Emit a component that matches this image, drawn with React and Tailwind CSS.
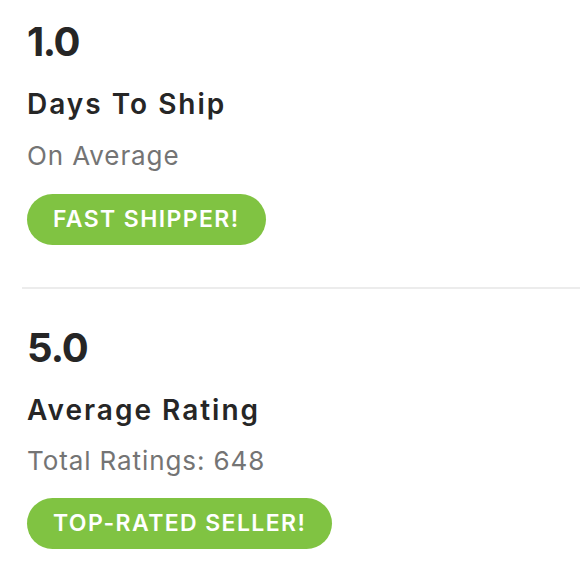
export default function App() {
  const font = { fontFamily: 'Inter, "Noto Sans", sans-serif' };
  return (
    <div className="w-[580px] h-[580px] bg-white overflow-hidden" style={font}>
      <div className="pl-[27px] pt-[22px]">
        <div className="text-[40px] leading-[40px] font-bold text-[#262626] tracking-[-1.5px]">1.0</div>
        <div className="mt-[29px] text-[28px] leading-[27px] font-semibold text-[#262626] tracking-[2px]">Days To Ship</div>
        <div className="mt-[25px] text-[26px] leading-[25px] text-[#747474] tracking-[0.9px]">On Average</div>
        <div className="mt-[26px] inline-flex items-center h-[51px] px-[26px] rounded-full bg-[#80c342] text-white text-[23px] font-semibold tracking-[1.4px]">
          FAST SHIPPER!
        </div>
      </div>
      <div className="ml-[22px] mt-[42px] h-[2px] bg-[#ececec]" />
      <div className="pl-[27px] pt-[39px]">
        <div className="text-[40px] leading-[40px] font-bold text-[#262626] tracking-[-1px]">5.0</div>
        <div className="mt-[29px] text-[28px] leading-[27px] font-semibold text-[#262626] tracking-[2px]">Average Rating</div>
        <div className="mt-[24px] text-[26px] leading-[25px] text-[#747474] tracking-[0.9px]">Total Ratings: 648</div>
        <div className="mt-[25px] inline-flex items-center h-[51px] px-[26px] rounded-full bg-[#80c342] text-white text-[23px] font-semibold tracking-[1.4px]">
          TOP-RATED SELLER!
        </div>
      </div>
    </div>
  );
}
